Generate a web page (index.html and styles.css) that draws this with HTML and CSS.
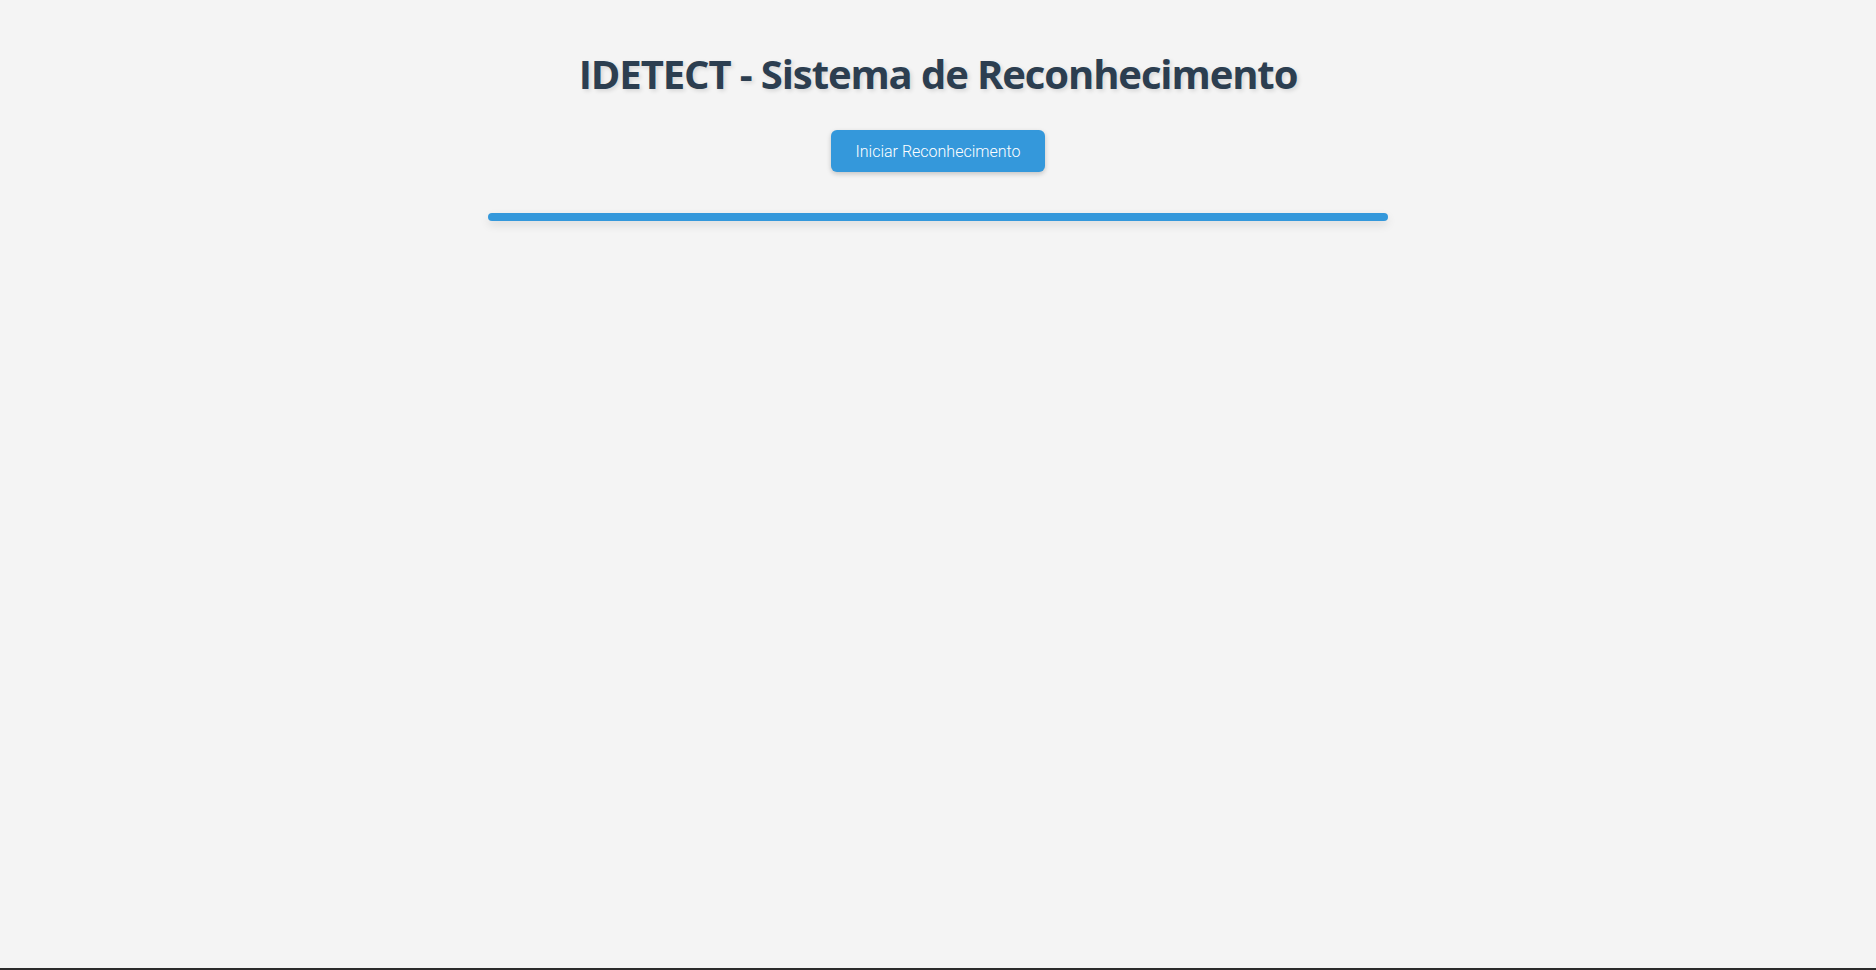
FILE: index.html
```html
<!DOCTYPE html>
<html lang="pt">
<head>
<meta charset="utf-8">
<title>IDETECT - Sistema de Reconhecimento</title>
<link rel="stylesheet" href="styles.css">
</head>
<body>
<main class="app">
  <h1 class="title">IDETECT - Sistema de Reconhecimento</h1>
  <button class="start-btn" type="button">Iniciar Reconhecimento</button>
  <div class="video-bar"></div>
</main>
<div class="bottom-edge"></div>
</body>
</html>
```

FILE: styles.css
```css
html, body {
  margin: 0;
  padding: 0;
  height: 100%;
}
body {
  background: #f4f4f4;
  font-family: "Open Sans", "Noto Sans", sans-serif;
  display: flex;
  flex-direction: column;
}
.app {
  flex: 1;
  display: flex;
  flex-direction: column;
  align-items: center;
  padding-top: 49px;
}
.title {
  margin: 0;
  font-family: "Open Sans", sans-serif;
  font-weight: 700;
  font-size: 40px;
  line-height: 50px;
  color: #2c3e50;
  text-shadow: 2px 2px 4px rgba(0, 0, 0, 0.12);
  letter-spacing: -1.1px;
}
.start-btn {
  margin-top: 31px;
  height: 42px;
  padding: 0 25px;
  border: none;
  border-radius: 6px;
  background: #3498db;
  color: #ffffff;
  font-family: Roboto, "Liberation Sans", sans-serif;
  font-weight: 300;
  font-size: 16px;
  box-shadow: 0 2px 5px rgba(0, 0, 0, 0.2);
  cursor: pointer;
}
.video-bar {
  margin-top: 41px;
  width: 900px;
  height: 8px;
  border-radius: 4px;
  background: #3498db;
  box-shadow: 0 4px 10px rgba(0, 0, 0, 0.1);
}
.bottom-edge {
  height: 2px;
  background: #2b2b2b;
}
```
